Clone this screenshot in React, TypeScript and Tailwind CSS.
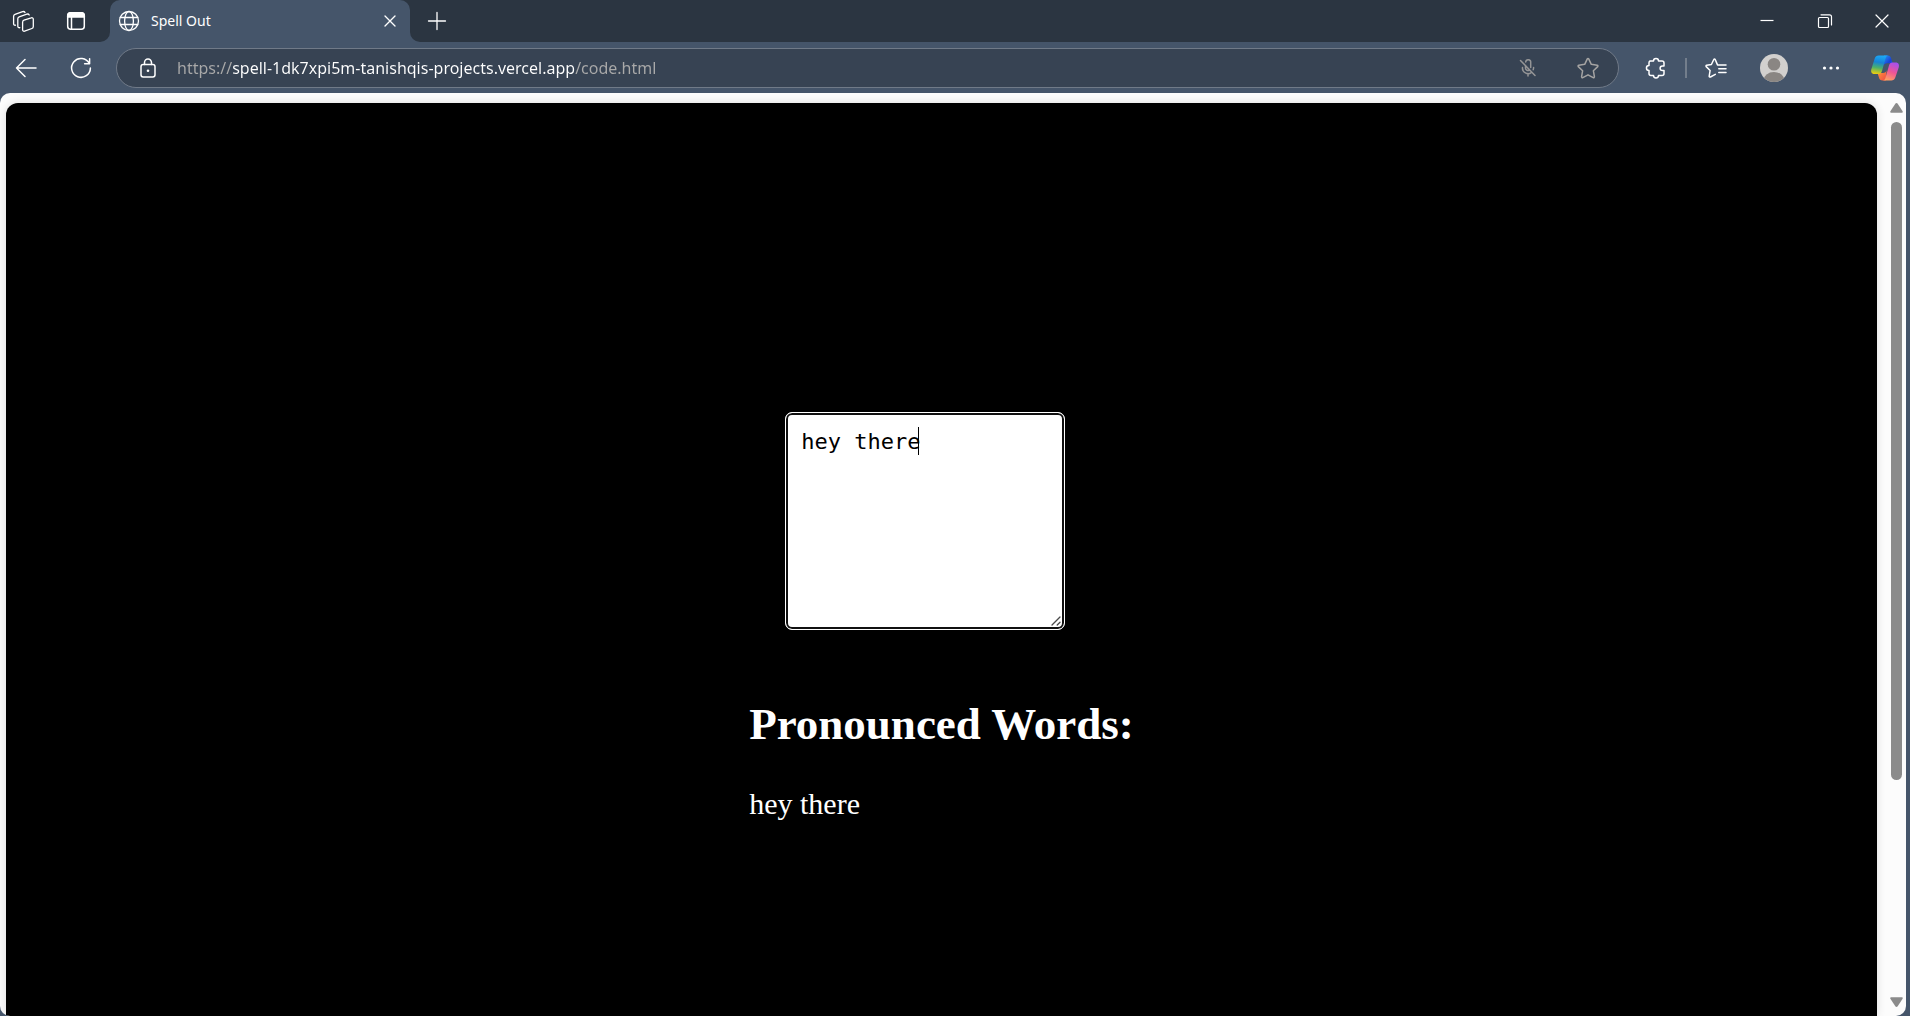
import { useState } from 'react';
import type { ReactNode } from 'react';

type IconProps = { size?: number; children: ReactNode; className?: string };

function Icon({ size = 24, children, className = '' }: IconProps) {
  return (
    <svg
      width={size}
      height={size}
      viewBox="0 0 24 24"
      fill="none"
      stroke="currentColor"
      strokeWidth={1.5}
      strokeLinecap="round"
      strokeLinejoin="round"
      aria-hidden="true"
      className={className}
    >
      {children}
    </svg>
  );
}

const WorkspacesIcon = () => (
  <Icon>
    <g strokeWidth={1.3}>
      <path d="M12 11.200 19.300 8.800a1.500 1.500 0 0 1 2 1.400v7.300c0 .9-.5 1.700-1.400 2l-7.300 2.700a1.500 1.500 0 0 1-2-1.400v-7.600c0-.9.500-1.700 1.400-2z" />
      <path d="M7.800 18.700c-1 .2-2-.5-2-1.500V9.800c0-.9.500-1.700 1.400-2l7.600-2.700c1-.3 2 .1 2.400.9" />
      <path d="M3.500 16.200c-1 .2-1.900-.5-1.900-1.500V7.300c0-.9.500-1.700 1.400-2l7.600-2.700c1-.3 2 .1 2.400.9" />
    </g>
  </Icon>
);

const TabActionsIcon = () => (
  <Icon>
    <rect x="3.700" y="3.700" width="16.600" height="16.600" rx="3" />
    <path d="M3.700 8V6.500a2.800 2.800 0 0 1 2.800-2.800h11a2.800 2.800 0 0 1 2.800 2.800V8z" fill="currentColor" />
    <path d="M7.500 8v12" />
  </Icon>
);

const GlobeIcon = () => (
  <Icon>
    <g strokeWidth={1.300}>
      <circle cx="12" cy="12" r="9.500" />
      <ellipse cx="12" cy="12" rx="4.400" ry="9.500" />
      <path d="M3.300 8.500h17.400M3.300 15.500h17.400" />
    </g>
  </Icon>
);

const BackIcon = () => (
  <Icon>
    <path d="M22 12H2.500M11 3.500 2.500 12l8.500 8.500" />
  </Icon>
);

const RefreshIcon = () => (
  <Icon>
    <path d="M20.300 7.500A9.400 9.400 0 1 0 21.400 12M20.600 2.800v5h-5" />
  </Icon>
);

const LockIcon = () => (
  <Icon>
    <rect x="5" y="8.500" width="14" height="12.500" rx="2.200" />
    <path d="M8.500 8.500V6.500a3.500 3.500 0 0 1 7 0v2" />
    <circle cx="12" cy="14.700" r="1.300" fill="currentColor" stroke="none" />
  </Icon>
);

const MicOffIcon = () => (
  <Icon>
    <path d="M4.500 4.500 19 19.500M9.500 9.500V12a2.600 2.600 0 0 0 4 2.100M9.700 6A2.500 2.500 0 0 1 14.700 6.500v5M6.500 11.500a5.500 5.500 0 0 0 9 4.800M17.600 11.500c0 .8-.1 1.500-.4 2.200M12 17.500v2.500" />
  </Icon>
);

const StarIcon = () => (
  <Icon>
    <path d="M11.300 2.900a.8.8 0 0 1 1.400 0l2.600 5.400 5.900.9c.7.100 1 .9.500 1.400l-4.300 4.200 1 5.900c.1.700-.6 1.200-1.200.9L12 18.800l-5.200 2.800c-.6.3-1.300-.2-1.200-.9l1-5.900-4.300-4.200c-.5-.5-.2-1.300.5-1.400l5.900-.9z" />
  </Icon>
);

const PuzzleIcon = () => (
  <Icon>
    <path d="M6 5h3.500c0-3.400 5-3.400 5 0H18a2 2 0 0 1 2 2v3h-1.500c-3.200 0-3.200 4.500 0 4.500H20v3a2 2 0 0 1-2 2h-3.500c0 3.200-5 3.200-5 0H7a2 2 0 0 1-2-2v-3c-3.400 0-3.400-5 0-5V7a2 2 0 0 1 1-2z" />
  </Icon>
);

const FavoritesIcon = () => (
  <Icon>
    <path d="M9.800 3.500a.8.8 0 0 1 1.400 0l2.300 5.400H22M9.800 3.500 7.400 8.500l-4.700.7c-.7.100-1 .9-.5 1.400l3.900 3.900-.9 5.600c-.1.700.6 1.200 1.200.9l4.900-2.600" />
    <path d="M14.800 12.700H22M14.800 16.500H22" />
  </Icon>
);

const CopilotIcon = () => (
  <svg width="30" height="28" viewBox="0 0 30 28" aria-hidden="true">
    <defs>
      <linearGradient id="copilotCool" x1="0.400" y1="0" x2="0.250" y2="1">
        <stop offset="0" stopColor="#1ba7f5" />
        <stop offset="0.350" stopColor="#1683d6" />
        <stop offset="0.650" stopColor="#4bb06b" />
        <stop offset="1" stopColor="#f3cf0c" />
      </linearGradient>
      <linearGradient id="copilotWarm" x1="0.700" y1="0" x2="0.300" y2="1">
        <stop offset="0" stopColor="#a650ee" />
        <stop offset="0.500" stopColor="#ee5496" />
        <stop offset="1" stopColor="#ffa25f" />
      </linearGradient>
      <linearGradient id="copilotBlue" x1="0" y1="0" x2="1" y2="1">
        <stop offset="0" stopColor="#2a9cf0" />
        <stop offset="0.600" stopColor="#1742d8" />
        <stop offset="1" stopColor="#2456e6" />
      </linearGradient>
      <linearGradient id="copilotRed" x1="0" y1="0" x2="1" y2="1">
        <stop offset="0" stopColor="#ff9a36" />
        <stop offset="1" stopColor="#ee4a48" />
      </linearGradient>
    </defs>
    <path d="M14 1.500h3.500c2 0 3 1 3.600 2.800l1.600 5H17c-2 0-3 1-3.500 2.800z" fill="url(#copilotBlue)" />
    <path d="M16 26.500h-3.500c-2 0-3-1-3.500-2.800L7.600 19H13c2 0 3-1 3.500-2.800z" fill="url(#copilotRed)" />
    <path d="M8.700 1.500h9.800c-1.700 0-2.500 1.100-3 2.800L12 17c-.5 1.700-1.600 3-3.600 3H4.500c-3 0-3.900-2.300-3.100-5L4.700 4.500c.6-1.800 2-3 4-3z" fill="url(#copilotCool)" />
    <path d="M21.300 26.500H12.500c1.700 0 2.500-1.100 3-2.800L19 11.500c.5-1.700 1.600-3 3.600-3h3c3 0 3.900 2.300 3.100 5l-3.400 10c-.6 1.800-2 3-4 3z" fill="url(#copilotWarm)" />
  </svg>
);

const AvatarIcon = () => (
  <svg width="28" height="28" viewBox="0 0 28 28" aria-hidden="true">
    <defs>
      <clipPath id="avatarRound">
        <circle cx="14" cy="14" r="14" />
      </clipPath>
    </defs>
    <g clipPath="url(#avatarRound)">
      <rect width="28" height="28" fill="#d2d0ce" />
      <circle cx="14" cy="10.300" r="6.300" fill="#8a8683" />
      <ellipse cx="14" cy="26.500" rx="10.500" ry="8.500" fill="#8a8683" />
    </g>
  </svg>
);

function BarButton({ label, className, children }: { label: string; className: string; children: ReactNode }) {
  return (
    <button type="button" aria-label={label} className={`flex shrink-0 items-center justify-center ${className}`}>
      {children}
    </button>
  );
}

function TabStrip() {
  return (
    <div className="flex h-[42px] text-white">
      <div className="flex w-[110px] shrink-0 rounded-br-[10px] bg-[#2b3541]">
        <BarButton label="Workspaces" className="w-12"><WorkspacesIcon /></BarButton>
        <BarButton label="Tab actions" className="w-14"><TabActionsIcon /></BarButton>
      </div>
      <div className="w-[300px] shrink-0 bg-linear-to-b from-[#2b3541] from-50% to-[#45556a] to-50%">
        <div className="flex h-full items-center rounded-t-[10px] bg-[#45556a] pl-[7px] pr-1">
          <GlobeIcon />
          <span className="ml-[10px] flex-1 font-['Noto_Sans',sans-serif] text-[14px] leading-5">Spell Out</span>
          <BarButton label="Close tab" className="size-8">
            <Icon size={16}><path d="M4.500 4.500l15 15M19.500 4.500l-15 15" strokeWidth={2} /></Icon>
          </BarButton>
        </div>
      </div>
      <div className="flex flex-1 justify-between rounded-bl-[10px] bg-[#2b3541]">
        <BarButton label="New tab" className="w-[54px]">
          <Icon><path d="M12 3.500v17M3.500 12h17" strokeWidth={1.300} /></Icon>
        </BarButton>
        <div className="flex">
          <BarButton label="Minimize" className="w-[58px]">
            <Icon><path d="M5.500 11.500h13" strokeWidth={1.200} strokeLinecap="butt" /></Icon>
          </BarButton>
          <BarButton label="Restore" className="w-[58px]">
            <Icon>
              <rect x="5.500" y="8.500" width="10" height="10" rx="1" strokeWidth={1.200} />
              <path d="M8 5.800h8.500a2 2 0 0 1 2 2V16" strokeWidth={1.200} />
            </Icon>
          </BarButton>
          <BarButton label="Close" className="w-[56px]">
            <Icon><path d="M6 6l12 12M18 6 6 18" strokeWidth={1.200} /></Icon>
          </BarButton>
        </div>
      </div>
    </div>
  );
}

function Toolbar() {
  const [url, setUrl] = useState('https://spell-1dk7xpi5m-tanishqis-projects.vercel.app/code.html');
  return (
    <div className="flex h-[51px] items-center text-white">
      <BarButton label="Back" className="h-10 w-[52px]"><BackIcon /></BarButton>
      <BarButton label="Refresh" className="h-10 w-[58px]"><RefreshIcon /></BarButton>
      <div className="ml-[6px] flex h-10 flex-1 items-center rounded-full border border-[#707a88] bg-[#374353]">
        <BarButton label="View site information" className="ml-[11px] w-10"><LockIcon /></BarButton>
        <input
          type="text"
          aria-label="Address"
          value={url}
          onChange={(e) => setUrl(e.target.value)}
          className="ml-[9px] min-w-0 flex-1 bg-linear-[90deg,#a9a9a9_0,#a9a9a9_56px,#ffffff_56px,#ffffff_397px,#a9a9a9_397px] bg-clip-text font-['Noto_Sans',sans-serif] text-[16px] leading-6 text-transparent caret-white outline-none"
        />
        <BarButton label="Microphone blocked" className="w-[60px] text-[#959596]"><MicOffIcon /></BarButton>
        <BarButton label="Add to favorites" className="w-[60px] text-[#a5a4a3]"><StarIcon /></BarButton>
      </div>
      <BarButton label="Extensions" className="ml-2 h-10 w-[58px]"><PuzzleIcon /></BarButton>
      <div className="h-5 w-[2px] bg-[#737e8c]" />
      <BarButton label="Favorites" className="h-10 w-[58px]"><FavoritesIcon /></BarButton>
      <BarButton label="Profile" className="h-10 w-[58px]"><AvatarIcon /></BarButton>
      <BarButton label="Settings and more" className="h-10 w-[56px]">
        <Icon>
          <g fill="currentColor" stroke="none">
            <circle cx="5.500" cy="12" r="1.600" />
            <circle cx="12" cy="12" r="1.600" />
            <circle cx="18.500" cy="12" r="1.600" />
          </g>
        </Icon>
      </BarButton>
      <BarButton label="Copilot" className="h-10 w-[51px]"><CopilotIcon /></BarButton>
    </div>
  );
}

function ScrollTrack() {
  return (
    <div className="flex w-[15px] shrink-0 flex-col items-center pb-[9px] pt-[10px] text-[#8b8b8b]">
      <svg width="13" height="10" viewBox="0 0 13 10" fill="currentColor" aria-hidden="true">
        <path d="M5.300.8a1.500 1.500 0 0 1 2.400 0l4.900 7.400c.4.800 0 1.600-.9 1.600H1.300c-.9 0-1.300-.8-.9-1.600z" />
      </svg>
      <div className="mb-[217px] mt-[9px] w-[11px] flex-1 rounded-full bg-[#8b8b8b]" />
      <svg width="13" height="10" viewBox="0 0 13 10" fill="currentColor" aria-hidden="true">
        <path d="M5.300 9.200a1.500 1.500 0 0 0 2.400 0l4.900-7.400c.4-.8 0-1.600-.9-1.600H1.300C.4.200 0 1 .4 1.800z" />
      </svg>
    </div>
  );
}

export default function App() {
  const [text, setText] = useState('hey there');
  return (
    <div className="flex min-h-screen flex-col bg-[#45556a]">
      <TabStrip />
      <Toolbar />
      <div className="mr-1 flex flex-1 overflow-hidden rounded-[10px] bg-[#fcfcfc]">
        <main className="ml-[6px] mt-[10px] flex flex-1 justify-center rounded-t-[12px] bg-black pb-16 pt-[309px] font-['Liberation_Serif',serif] text-white shadow-[0_0_10px_rgba(0,0,0,0.12)]">
          <div>
            <div className="relative ml-9 w-[280px]">
              <textarea
                aria-label="Text to spell out"
                value={text}
                onChange={(e) => setText(e.target.value)}
                spellCheck={false}
                className="block h-[218px] w-full resize-none rounded-[7px] border border-white bg-white px-[15px] py-[15px] font-['DejaVu_Sans_Mono',monospace] text-[22px] leading-7 text-black caret-transparent shadow-[inset_0_0_0_2px_#101010] outline-none"
              />
              <span className="absolute left-[133px] top-[15px] h-7 w-px bg-black" />
              <svg
                width="10"
                height="10"
                viewBox="0 0 10 10"
                fill="none"
                stroke="#4a4a4a"
                strokeWidth="1.300"
                strokeLinecap="round"
                aria-hidden="true"
                className="absolute bottom-1 right-1"
              >
                <path d="M1 9 9 1M6.200 9 9 6.200" />
              </svg>
            </div>
            <h1 className="mt-16 text-[45px] font-bold leading-[60px]">Pronounced Words:</h1>
            <p className="mt-8 text-[30px] leading-9">{text}</p>
          </div>
        </main>
        <div className="w-[12px] shrink-0" />
        <ScrollTrack />
        <div className="w-[2px] shrink-0" />
      </div>
    </div>
  );
}
